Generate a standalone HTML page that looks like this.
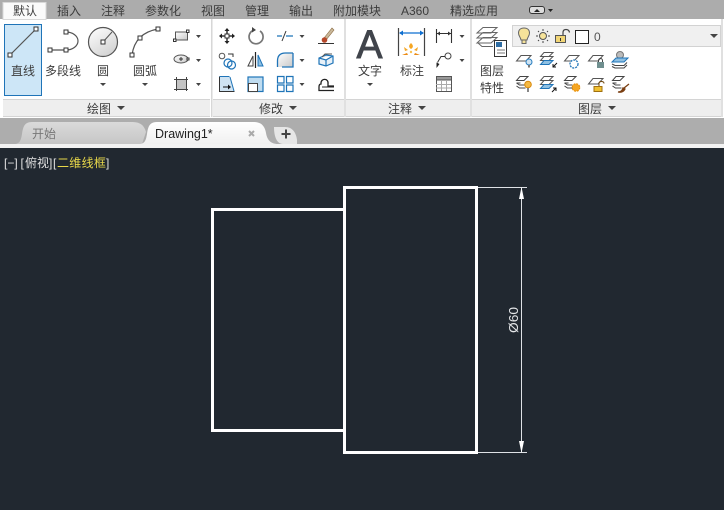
<!DOCTYPE html>
<html><head><meta charset="utf-8"><style>
html,body{margin:0;padding:0;background:#212830}
svg{display:block}
text{font-family:"Liberation Sans","Noto Sans CJK SC",sans-serif;font-size:12px;fill:#3c3c3c}
.m{text-anchor:middle}
.o{fill:#fff;stroke:#333;stroke-width:1}
.a{fill:#444}
</style></head><body>
<svg width="724" height="510" viewBox="0 0 724 510" xmlns="http://www.w3.org/2000/svg">
<defs>
<linearGradient id="g" x1="0" y1="0" x2=".6" y2="1"><stop offset="0" stop-color="#fff"/><stop offset="1" stop-color="#d4d4d4"/></linearGradient>
<linearGradient id="g2" x1="0" y1="0" x2="1" y2="1"><stop offset="0" stop-color="#fff"/><stop offset="1" stop-color="#c8c8c8"/></linearGradient>
<linearGradient id="t1" x1="0" y1="0" x2="0" y2="1"><stop offset="0" stop-color="#dadada"/><stop offset="1" stop-color="#c6c6c6"/></linearGradient>
<linearGradient id="t2" x1="0" y1="0" x2="0" y2="1"><stop offset="0" stop-color="#fff"/><stop offset="1" stop-color="#f0f0f0"/></linearGradient>
<g id="pl"><path d="M5 .5h10l-5 5.500H.5z" fill="#fff" stroke="#555"/></g>
<g id="st"><path d="M4 .5h8l-4 4H.5zM.5 7h4M.5 7l3 2h5M.5 10l3 2h6" fill="#fff" stroke="#444"/></g>
<g id="sb"><path d="M4 .5h9l-4 4H.5zM4 4.500h9l-4 4H.5z" fill="#fff" stroke="#555"/><path d="M4 8.500h9l-4 4H.5z" fill="#8fc0e2" stroke="#1f74b8"/></g>
</defs>
<rect width="724" height="510" fill="#212830"/>
<rect width="724" height="19" fill="#acacac"/>
<rect y="118" width="724" height="26" fill="#adadad"/>
<rect y="144" width="724" height="4" fill="#f2f2f2"/>
<rect y="19" width="724" height="99" fill="#fff"/>
<rect x="3" y="2.500" width="43" height="17" fill="#fafafa" stroke="#d8d8d8"/>
<text x="13" y="15">默认</text><text x="57" y="15">插入</text><text x="101" y="15">注释</text><text x="145" y="15">参数化</text><text x="201" y="15">视图</text><text x="245" y="15">管理</text><text x="289" y="15">输出</text><text x="333" y="15">附加模块</text><text x="401" y="15">A360</text><text x="450" y="15">精选应用</text>
<rect x="529.500" y="6.500" width="15" height="7" rx="2.500" fill="#ddd" stroke="#333"/><path d="M534 12l3-3 3 3z" fill="#222"/><path d="M548 9h5l-2.500 3z" fill="#222"/>

<!-- panel footers -->
<rect x="3" y="99" width="207" height="17" fill="#eeeeee"/><rect x="213" y="99" width="131" height="17" fill="#eeeeee"/><rect x="346" y="99" width="124" height="17" fill="#eeeeee"/><rect x="472" y="99" width="249" height="17" fill="#eeeeee"/>
<path d="M3 99.500h207M213 99.500h131M346 99.500h124M472 99.500h249M3 116.500h207M213 116.500h131M346 116.500h124M472 116.500h249" stroke="#d4d4d4"/>
<path d="M211.800 19v98M345 19v98M471 19v98M722 19v98" stroke="#d0d0d0" stroke-width="1.300"/>
<text class="m" x="99" y="113">绘图</text><path d="M117 106h8l-4 4z" fill="#444"/>
<text class="m" x="271" y="113">修改</text><path d="M289 106h8l-4 4z" fill="#444"/>
<text class="m" x="400" y="113">注释</text><path d="M418 106h8l-4 4z" fill="#444"/>
<text class="m" x="590" y="113">图层</text><path d="M608 106h8l-4 4z" fill="#444"/>

<!-- line button -->
<rect x="4.500" y="24.500" width="37" height="71" fill="#cde6f7" stroke="#1f74b8"/>
<path d="M10 55L36 29" stroke="#555" stroke-width="1.200"/><rect x="8" y="53" width="4" height="4" class="o"/><rect x="34" y="27" width="4" height="4" class="o"/>
<text class="m" x="23" y="75">直线</text>
<!-- polyline -->
<path d="M50 50h16a12 9 0 0 0 0-18" fill="none" stroke="#555" stroke-width="1.200"/><rect x="48" y="48" width="4" height="4" class="o"/><rect x="64" y="48" width="4" height="4" class="o"/><rect x="64" y="30" width="4" height="4" class="o"/>
<text class="m" x="63" y="75">多段线</text>
<!-- circle -->
<circle cx="103" cy="42" r="14.500" fill="url(#g)" stroke="#555" stroke-width="1.200"/><path d="M103 42l9-10" stroke="#555"/><rect x="101" y="40" width="4" height="4" class="o"/>
<text class="m" x="103" y="75">圆</text><path d="M100 83h6l-3 3z" fill="#444"/>
<!-- arc -->
<path d="M132 55Q135 33 158 29" fill="none" stroke="#555" stroke-width="1.200"/><rect x="130" y="53" width="4" height="4" class="o"/><rect x="138" y="36" width="4" height="4" class="o"/><rect x="156" y="27" width="4" height="4" class="o"/>
<text class="m" x="145" y="75">圆弧</text><path d="M142 83h6l-3 3z" fill="#444"/>
<!-- rect/ellipse/hatch -->
<rect x="175.500" y="32" width="12" height="8" fill="url(#g2)" stroke="#555"/><rect x="173.500" y="39" width="2.500" height="2.500" class="o"/><rect x="186.500" y="30" width="2.500" height="2.500" class="o"/><path d="M196 35h5l-2.500 3z" fill="#444"/>
<ellipse cx="181" cy="59" rx="7" ry="4" fill="url(#g2)" stroke="#555"/><path d="M179 59h4M181 57v4" stroke="#333"/><rect x="187" y="58" width="2" height="2" class="o"/><path d="M196 59h5l-2.500 3z" fill="#444"/>
<rect x="176" y="79" width="11" height="11" fill="#c4c4c4"/><path d="M174 79.500h14M174 89.500h14M176.500 77v14M186.500 77v14" stroke="#444"/><path d="M196 83h5l-2.500 3z" fill="#444"/>

<!-- modify col 1 -->
<path d="M220 36h14M227 29v14" stroke="#333" stroke-width="1.500"/><path d="M227 28l-2.500 3h5zM227 44l-2.500-3h5zM219 36l3-2.500v5zM235 36l-3-2.500v5z" fill="#222"/><rect x="225" y="34" width="4" height="4" fill="#fff" stroke="#333"/>
<circle cx="222" cy="56" r="2.800" fill="#fff" stroke="#555"/><circle cx="228" cy="63" r="4" fill="#fff" stroke="#1f74b8" stroke-width="1.200"/><circle cx="231.500" cy="65" r="4" fill="none" stroke="#1f74b8" stroke-width="1.200"/><path d="M228 54h5v3" fill="none" stroke="#333"/>
<path d="M220 77h10l4 14h-14z" fill="#cfe3f2"/><path d="M219.500 76.500v15h15" fill="none" stroke="#333"/><path d="M230 77l4 14M219.500 76.500h10" stroke="#1f74b8"/><path d="M223 87h6" stroke="#111"/><path d="M231 87l-3-2.500v5z" fill="#111"/>
<!-- col 2 -->
<path d="M260 31a7 7 0 1 1-6-.9" fill="none" stroke="#777" stroke-width="1.700"/><path d="M252 27l4 3-4 2.500z" fill="#444"/>
<path d="M255.500 52v16" stroke="#222" stroke-width="1.200"/><path d="M253 56v10h-5z" fill="#fff" stroke="#444"/><path d="M258 55v11h5z" fill="#8fc0e2" stroke="#1f74b8"/>
<rect x="248" y="77" width="15" height="14.500" fill="#bfdcf0" stroke="#1f74b8" stroke-width="1.200"/><rect x="248.500" y="83.500" width="9" height="8" fill="#fff" stroke="#444"/>
<!-- col 3 -->
<path d="M277 36h5M286 36h7" stroke="#1f74b8" stroke-width="1.200"/><path d="M282 41l4-10" stroke="#333"/><path d="M299.500 35h5l-2.500 3z" fill="#444"/>
<path d="M277.500 67v-6q0-8 8-8h7.500v14z" fill="url(#g2)"/><path d="M277.500 67v-6q0-8 8-8h7.500M293 53v14h-11" fill="none" stroke="#1f74b8" stroke-width="1.300"/><path d="M299.500 59h5l-2.500 3z" fill="#444"/>
<path d="M277.500 76.500h6.500v6.500h-6.500zM286.500 76.500h6.500v6.500h-6.500zM277.500 85h6.500v6.500h-6.500zM286.500 85h6.500v6.500h-6.500z" fill="#fff" stroke="#1f74b8" stroke-width="1.200"/><path d="M299.500 83h5l-2.500 3z" fill="#444"/>
<!-- col 4 -->
<path d="M318 43.500h16" stroke="#333"/><path d="M324 38l8-10 2 2-8 10z" fill="#c9b79a" stroke="#8a6a40" stroke-width=".6"/><circle cx="324.500" cy="40" r="2.800" fill="#b5482a"/>
<path d="M319 58l7-3 7 1v7l-7 3-7-2zM319 58l7 2 7-4M326 60v6" fill="#e8f1f8" stroke="#1f74b8" stroke-width="1.200"/><path d="M322 57l3-3h7" stroke="#555" fill="none"/>
<path d="M319 87v3.500h15M334 86h-6v-2c1-6-7-6-7-1v1c-2 0-2 2-2 3" fill="none" stroke="#222" stroke-width="1.300"/><path d="M322 87h12" stroke="#222"/>

<!-- annotation -->
<text class="m" x="369.500" y="58" textLength="26" lengthAdjust="spacingAndGlyphs" style="font-size:40px;font-family:'Liberation Sans',sans-serif;fill:#40444b;stroke:#40444b;stroke-width:.9">A</text>
<text class="m" x="370" y="75">文字</text><path d="M367 83h6l-3 3z" fill="#444"/>
<path d="M398.500 28v28M424.500 28v28" stroke="#444" stroke-width="1.200"/><path d="M400 33h23" stroke="#0f6fd0" stroke-width="1.300"/><path d="M399 33l4-2.500v5zM424 33l-4-2.500v5z" fill="#0f6fd0"/>
<path d="M411 43c2 2 3 4 0 6-3-2-2-4 0-6z" fill="#f5a623"/><path d="M404 47l4 3-3 1zM418 47l-4 3 3 1z" fill="#f5a623"/><path d="M402 55l5-2 1 2zM420 55l-5-2-1 2z" fill="#eb8a12"/><circle cx="411" cy="52" r="1.200" fill="#f8c050"/>
<text class="m" x="412" y="75">标注</text>
<path d="M436.500 29v14M451.500 29v14M437 33.500h14" stroke="#333" stroke-width="1.100"/><path d="M437 33.500l3-2v4zM451 33.500l-3-2v4z" fill="#333"/><path d="M459.500 35h5l-2.500 3z" fill="#444"/>
<circle cx="448" cy="56" r="3" fill="#fff" stroke="#444"/><path d="M445 56.500h-4l-3.500 6" fill="none" stroke="#333"/><path d="M436.500 68l0-5.500 3 1.500z" fill="#222"/><path d="M459.500 59h5l-2.500 3z" fill="#444"/>
<rect x="436.500" y="76.500" width="15" height="15" fill="#fff" stroke="#555"/><rect x="436.500" y="76.500" width="15" height="3.500" fill="#999" stroke="#555"/><path d="M436 84.500h15M436 88h15M441.500 80v11M446.500 80v11" stroke="#aaa"/>

<!-- layers -->
<path d="M477 33l6-5.500h14l-6 5.500zM477 38l6-5.500h14l-6 5.500zM477 43l6-5.500h14l-6 5.500zM478 43l4 3.500h11" fill="#fff" stroke="#666"/>
<rect x="494.500" y="40.500" width="12" height="16" fill="#fff" stroke="#333"/><rect x="496" y="42" width="6" height="5" fill="#2e6da4"/><path d="M497 50h8M497 53h8" stroke="#777"/>
<text class="m" x="492" y="75">图层</text><text class="m" x="492" y="92">特性</text>
<rect x="512.500" y="25.500" width="208" height="21" fill="#f0f0f0" stroke="#d2d2d2"/>
<path d="M524 28c3.500 0 5.500 2 5.500 5 0 3-2 4-2.500 7h-6c-.5-3-2.500-4-2.500-7 0-3 2-5 5.500-5zM522 40h4v3.500h-4z" fill="#f6e39a" stroke="#666"/>
<circle cx="543" cy="36" r="3.500" fill="#f6e39a" stroke="#555"/><path d="M543 29v2M543 41v2M536 36h2M548 36h2M538 31l1 1M547 40l1 1M548 31l-1 1M539 40l-1 1" stroke="#444"/>
<rect x="555.500" y="35.500" width="10" height="7" fill="#f2d676" stroke="#555"/><path d="M560.500 41v-3" stroke="#333"/><path d="M563 35v-2.500q0-3 3-3t3.500 3" fill="none" stroke="#444" stroke-width="1.200"/>
<rect x="575.500" y="30.500" width="13" height="13" fill="#fff" stroke="#222"/>
<text x="594" y="41" style="fill:#555">0</text>
<path d="M710 34h8l-4 4z" fill="#444"/>

<!-- layer tool rows -->
<use href="#pl" x="516" y="55"/><circle cx="529" cy="62" r="3" fill="#cfe3f2" stroke="#2a7fc0"/><path d="M528 65h2v2.500h-2z" fill="#777"/>
<use href="#sb" x="540" y="52"/><path d="M557 63l-4 4M553 64v3h3" stroke="#111" fill="none"/>
<use href="#pl" x="564" y="55"/><circle cx="574" cy="64" r="4" fill="#fff" stroke="#1f74b8" stroke-width="1.300" stroke-dasharray="2 1"/>
<use href="#pl" x="588" y="55"/><rect x="597" y="62" width="7" height="6" fill="#6f8f8f"/><path d="M598.500 62v-1.500a2 2 0 0 1 4 0v1.500" fill="none" stroke="#444"/>
<circle cx="620" cy="55" r="3.500" fill="#bbb" stroke="#777"/><path d="M616 58h12l-4 4h-12z" fill="#8fc0e2" stroke="#1f74b8"/><path d="M612 64l3 1.500h9l3-3M612 66.500l3 1.500h9l3-3" fill="none" stroke="#444"/>
<use href="#st" x="516" y="76"/><circle cx="528" cy="84.500" r="3.300" fill="#f5b942" stroke="#d88a10"/><path d="M527 88h2v4h-2z" fill="#888"/>
<use href="#sb" x="540" y="76"/><path d="M552 92l4-4M553 88h3v3" stroke="#111" fill="none"/>
<use href="#st" x="564" y="76"/><circle cx="576" cy="87.500" r="3.800" fill="#f5a623" stroke="#e68a00" stroke-dasharray="2 1"/>
<use href="#pl" x="588" y="78"/><rect x="594" y="86.500" width="8" height="5" fill="#f0c030" stroke="#a07010"/><path d="M599 86v-2.500q0-2 2.500-2t2.500 2" fill="none" stroke="#704810"/>
<use href="#st" x="612" y="76"/><path d="M618 92q4 0 5-4l2 1q-2 4-7 3zM624 88l5-4" stroke="#7a3e12" fill="#7a3e12" stroke-width="1.300"/>

<!-- tabs -->
<path d="M14 144c6 0 7-4 8-10 1-8 3-12 10-12h100c8 0 12 3 14 10l-4 12z" fill="url(#t1)"/>
<text x="32" y="138" style="fill:#777">开始</text>
<path d="M139 144c6 0 7-4 8-10 1-8 3-12 10-12h97c8 0 11 5 12 11 1 6 4 11 12 11z" fill="url(#t2)"/>
<text x="155" y="138" style="font-size:12.500px;fill:#222">Drawing1*</text>
<path d="M249 131l5 5M254 131l-5 5" stroke="#aaa" stroke-width="2"/>
<path d="M274 127h11c7 0 11 5 12 13v4h-14c-6 0-9-7-9-17z" fill="#e6e6e6"/>
<path d="M281.500 134h9M286 129.500v9" stroke="#444" stroke-width="2"/>

<!-- viewport label -->
<text y="167" style="fill:#e0e0e0"><tspan x="4">[−]</tspan><tspan x="20.500">[</tspan><tspan x="25">俯视</tspan><tspan x="49">]</tspan><tspan x="53">[</tspan><tspan x="57" style="fill:#e8d84a;letter-spacing:.3px">二维线框</tspan><tspan x="106">]</tspan></text>

<!-- drawing -->
<path d="M344.500 209.500H212.500V430.500H344.500" fill="none" stroke="#fff" stroke-width="3"/>
<rect x="344.500" y="187.500" width="132" height="265" fill="none" stroke="#fff" stroke-width="3"/>
<path d="M478 187.500h49M478 452.500h49M521.500 187v266" stroke="#dfe2e6" stroke-width="1"/>
<path d="M521.500 187l-2.500 12h5zM521.500 453l-2.500-12h5z" fill="#fff"/>
<text transform="translate(518,333) rotate(-90)" textLength="26" lengthAdjust="spacingAndGlyphs" style="font-size:13px;fill:#e4e6e8">Ø60</text>
</svg>
</body></html>
